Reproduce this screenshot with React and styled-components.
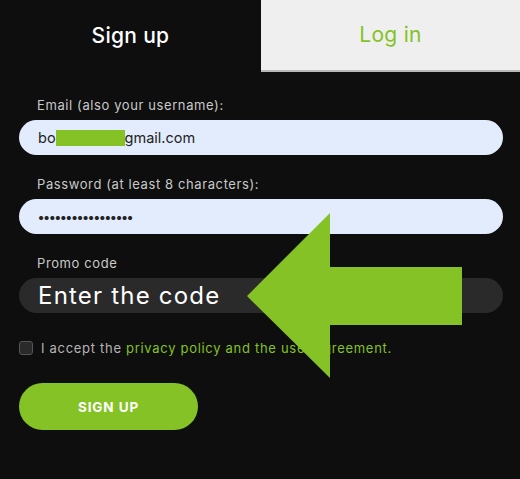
import React from 'react';
import styled, { createGlobalStyle } from 'styled-components';

const Global = createGlobalStyle`
  html, body {
    margin: 0;
    background: #0e0e0e;
    font-family: "Inter", "Noto Sans", sans-serif;
  }
`

const Page = styled.div`
  position: relative;
  width: 520px;
  height: 479px;
  background: #0e0e0e;
  overflow: hidden;
`

const Tabs = styled.div`
  display: flex;
  height: 72px;
`

const Tab = styled.div`
  flex: ${p => (p.active ? '0 0 261px' : '1')};
  display: flex;
  align-items: center;
  justify-content: center;
  font-size: 21px;
  letter-spacing: 0.3px;
  font-weight: ${p => (p.active ? 500 : 400)};
  color: ${p => (p.active ? '#ffffff' : '#84c225')};
  background: ${p => (p.active ? '#0e0e0e' : '#efefef')};
  border-bottom: ${p => (p.active ? 'none' : '2px solid #b9b9b9')};
  box-sizing: border-box;
  padding-bottom: 2px;
`

const Form = styled.div`
  padding: 25px 17px 0 19px;
  display: flex;
  flex-direction: column;
`

const Label = styled.div`
  color: #c9c9c9;
  font-size: 13px;
  letter-spacing: 0.6px;
  padding-left: 18px;
  height: 16px;
  line-height: 16px;
  margin-bottom: 7px;
`

const Field = styled.div`
  height: 35px;
  border-radius: 18px;
  background: ${p => (p.dark ? '#2a2a2a' : '#e3ecfd')};
  color: ${p => (p.dark ? '#ffffff' : '#222')};
  font-size: ${p => (p.dark ? '24px' : '14.5px')};
  display: flex;
  align-items: center;
  padding-left: 19px;
  margin-bottom: 21px;
  letter-spacing: ${p => (p.dark ? '1.2px' : '0')};
`

const Redact = styled.span`
  display: inline-block;
  width: 69px;
  height: 16px;
  background: #84c225;
  vertical-align: middle;
`

const Dots = styled.span`
  font-size: 13px;
  letter-spacing: -0.6px;
  font-weight: 700;
`

const CheckRow = styled.div`
  display: flex;
  align-items: center;
  gap: 8px;
  margin-top: 6px;
  height: 16px;
  font-size: 13px;
  letter-spacing: 0.7px;
  color: #b5b5b5;
`

const Box = styled.span`
  flex: none;
  width: 12px;
  height: 12px;
  border: 1px solid #555;
  border-radius: 3px;
  background: #2a2a2a;
`

const Link = styled.span`
  color: #84c225;
`

const Button = styled.button`
  margin-top: 27px;
  width: 179px;
  height: 47px;
  border: none;
  border-radius: 24px;
  background: #84c225;
  color: #fff;
  font-family: inherit;
  font-weight: 700;
  font-size: 13.5px;
  letter-spacing: 0.9px;
`

const Arrow = styled.svg`
  position: absolute;
  left: 0;
  top: 0;
  pointer-events: none;
`

const App = () =>
  <Page>
    <Global />
    <Tabs>
      <Tab active>Sign up</Tab>
      <Tab>Log in</Tab>
    </Tabs>
    <Form>
      <Label>Email (also your username):</Label>
      <Field>bo<Redact />gmail.com</Field>
      <Label>Password (at least 8 characters):</Label>
      <Field><Dots>{'•'.repeat(17)}</Dots></Field>
      <Label>Promo code</Label>
      <Field dark>Enter the code</Field>
      <CheckRow>
        <Box />
        <span>I accept the <Link>privacy policy and the user agreement.</Link></span>
      </CheckRow>
      <div><Button>SIGN UP</Button></div>
    </Form>
    <Arrow width="520" height="479" viewBox="0 0 520 479">
      <polygon points="247,296 330,213 330,267 462,267 462,325 330,325 330,378" fill="#84c225" />
    </Arrow>
  </Page>

export default App
